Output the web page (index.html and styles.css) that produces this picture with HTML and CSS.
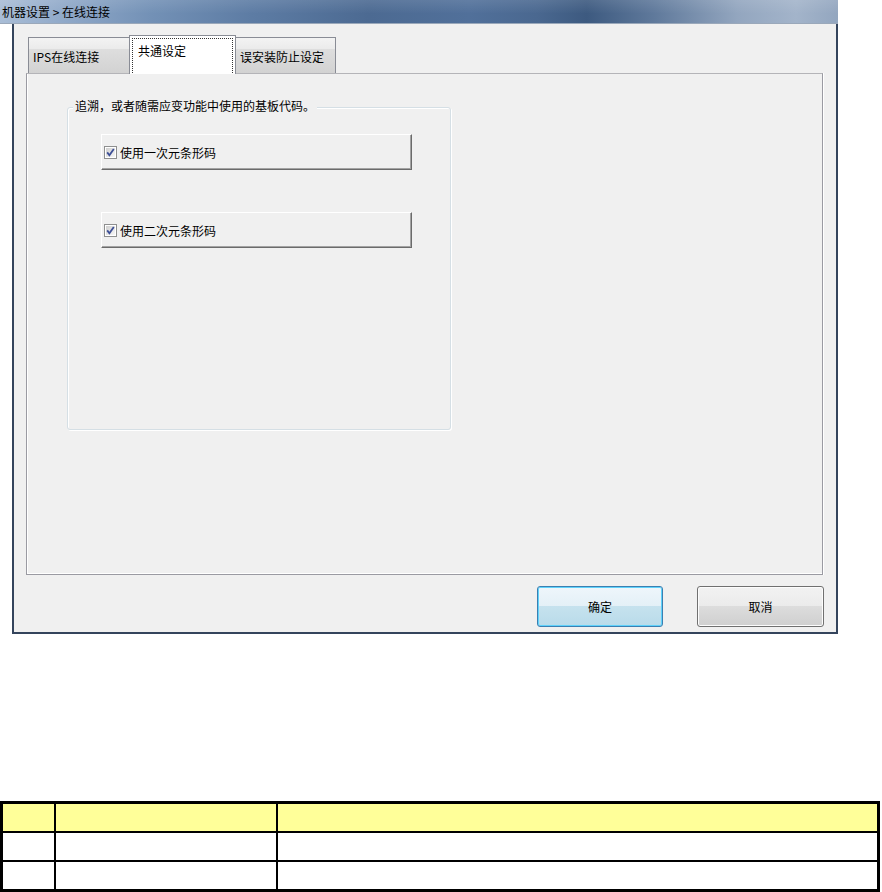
FILE: index.html
```html
<!DOCTYPE html>
<html lang="zh-CN">
<head>
    <meta charset="utf-8"/>
    <title>机器设置 > 在线连接</title>
    <link rel="stylesheet" href="styles.css">
</head>
<body>

    <div class="window">
        <div class="titlebar">机器设置 &gt; 在线连接</div>
        <div class="frame">
            <div class="tabs">
                <div class="tab">IPS在线连接</div>
                <div class="tab active"><span class="focus">共通设定</span></div>
                <div class="tab">误安装防止设定</div>
            </div>
            <div class="panel">
                <div class="group">
                    <span class="group-title">追溯，或者随需应变功能中使用的基板代码。</span>
                    <div class="check-list">
                        <label class="check-btn">
                            <svg class="check" width="13" height="13" viewBox="0 0 13 13">
                                <defs>
                                    <linearGradient id="cb" x1="0" y1="0" x2="1" y2="1">
                                        <stop offset="0" stop-color="#cfcfcf"/>
                                        <stop offset="1" stop-color="#f7f7f7"/>
                                    </linearGradient>
                                </defs>
                                <rect x="0.5" y="0.5" width="12" height="12" fill="#fff" stroke="#8e8f8f"/>
                                <rect x="2" y="2" width="9" height="9" fill="url(#cb)"/>
                                <path d="M3.2 6.4 L5.4 9.2 L9.8 2.9" fill="none" stroke="#3d4f96" stroke-width="1.8"/>
                            </svg>
                            <span>使用一次元条形码</span>
                        </label>
                        <label class="check-btn">
                            <svg class="check" width="13" height="13" viewBox="0 0 13 13">
                                <rect x="0.5" y="0.5" width="12" height="12" fill="#fff" stroke="#8e8f8f"/>
                                <rect x="2" y="2" width="9" height="9" fill="url(#cb)"/>
                                <path d="M3.2 6.4 L5.4 9.2 L9.8 2.9" fill="none" stroke="#3d4f96" stroke-width="1.8"/>
                            </svg>
                            <span>使用二次元条形码</span>
                        </label>
                    </div>
                </div>
            </div>
            <div class="actions">
                <button class="btn default">确定</button>
                <button class="btn">取消</button>
            </div>
        </div>
    </div>

    <div class="grid-table">
        <div class="cell head"></div>
        <div class="cell head"></div>
        <div class="cell head"></div>
        <div class="cell"></div>
        <div class="cell"></div>
        <div class="cell"></div>
        <div class="cell"></div>
        <div class="cell"></div>
        <div class="cell"></div>
    </div>

</body>
</html>
```

FILE: styles.css
```css
body {
    margin: 0;
    background: #fff;
    font-family: "Noto Sans CJK SC", "Noto Sans", sans-serif;
    font-size: 12px;
    color: #000;
}

.window {
    width: 838px;
}

/* title bar, aero-like blue glass */
.titlebar {
    height: 23px;
    line-height: 23px;
    padding-left: 2px;
    border-bottom: 1px solid #9aa8ba;
    background:
        linear-gradient(rgba(255, 255, 255, 0.1), rgba(255, 255, 255, 0) 60%),
        linear-gradient(90deg, #a9bdd6 0%, #8fa8c8 8%, #7391b6 18%, #5d7ca4 30%, #4c6a92 44%, #51709a 56%, #4a6890 64%, #3d5a80 70%, #5f799b 78%, #93a6bf 88%, #a3b4ca 95%, #93a6bf 100%);
}

.frame {
    margin-left: 12px;
    height: 597px;
    padding-top: 11px;
    border: 2px solid #34445c;
    border-top: none;
    background: #f0f0f0;
}

/* tab strip */
.tabs {
    display: flex;
    align-items: flex-end;
    height: 38px;
    margin-left: 14px;
    position: relative;
    z-index: 1;
}

.tab {
    box-sizing: border-box;
    height: 36px;
    padding: 10px 0 0 4px;
    border: 1px solid #898c95;
    border-bottom: none;
    background: linear-gradient(#f3f3f3, #ebebeb 30%, #dedede 30%, #d2d2d2);
    white-space: nowrap;
}

.tab:nth-child(1) {
    width: 102px;
}

.tab:nth-child(3) {
    width: 101px;
    margin-left: -1px;
}

.tab.active {
    width: 107px;
    height: 39px;
    margin: 0 0 -1px -1px;
    padding: 2px;
    background: #fff;
}

.focus {
    display: block;
    height: 35px;
    box-sizing: border-box;
    padding: 3px 0 0 5px;
    border: 1px dotted #333;
    border-bottom: none;
}

/* tab page */
.panel {
    box-sizing: border-box;
    width: 797px;
    height: 502px;
    margin-left: 12px;
    padding: 33px 0 0 40px;
    border: 1px solid #9a9aa2;
    border-top-color: #b4b4b8;
    box-shadow: inset 1px -1px 0 #fff, 1px 0 0 #fff;
}

.group {
    position: relative;
    box-sizing: border-box;
    width: 384px;
    height: 323px;
    border: 1px solid #d5dfe5;
    border-radius: 3px;
    box-shadow: inset 1px 1px 0 #fff, 1px 1px 0 #fff;
}

.group-title {
    position: absolute;
    top: -9px;
    left: 5px;
    padding: 0 2px;
    line-height: 14px;
    background: #f0f0f0;
}

.check-list {
    display: flex;
    flex-direction: column;
    gap: 42px;
    padding: 26px 0 0 33px;
}

.check-btn {
    box-sizing: border-box;
    display: flex;
    align-items: center;
    width: 311px;
    height: 36px;
    padding-left: 2px;
    border: 1px solid;
    border-color: #fff #6b6b6b #6b6b6b #fff;
    box-shadow: inset -1px -1px 0 #a3a3a3;
}

.check {
    flex: none;
    margin-right: 3px;
}

/* dialog buttons */
.actions {
    display: flex;
    justify-content: flex-end;
    gap: 34px;
    margin-top: 11px;
    padding-right: 12px;
}

.btn {
    width: 127px;
    height: 41px;
    font-family: inherit;
    font-size: 12px;
    color: #000;
    border: 1px solid #707070;
    border-radius: 3px;
    box-shadow: inset 0 0 0 1px #fcfcfc;
    background: linear-gradient(#f2f2f2, #ebebeb 48%, #dddddd 48%, #cfcfcf);
}

.btn.default {
    width: 126px;
    border-color: #3c7fb1;
    box-shadow: inset 0 0 0 1px #5fd2fb;
    background: linear-gradient(#eef6fb, #e4f0f7 48%, #c6e2ee 48%, #b9dbea);
}

/* table below the screenshot */
.grid-table {
    display: grid;
    grid-template-columns: 51px 220px 1fr;
    grid-auto-rows: 27px;
    gap: 2px;
    width: 874px;
    margin-top: 167px;
    border: 3px solid #000;
    background: #000;
}

.cell {
    background: #fff;
}

.cell.head {
    background: #ffff99;
}
```
